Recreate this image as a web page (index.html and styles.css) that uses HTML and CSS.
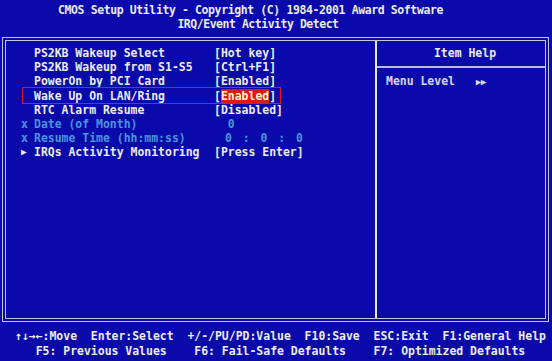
FILE: index.html
```html
<!DOCTYPE html>
<html lang="en">
  <head>
    <meta charset="UTF-8" />
    <title>CMOS Setup Utility</title>
    <link rel="stylesheet" href="styles.css">
  </head>
  <body>
    <div class="screen">
      <header class="title">
        <div class="title-main">CMOS Setup Utility - Copyright (C) 1984-2001 Award Software</div>
        <div class="title-sub">IRQ/Event Activity Detect</div>
      </header>

      <div class="frame">
        <div class="menu">
          <div class="row"><span class="mark"></span><span class="label">PS2KB Wakeup Select</span><span class="value">[Hot key]</span></div>
          <div class="row"><span class="mark"></span><span class="label">PS2KB Wakeup from S1-S5</span><span class="value">[Ctrl+F1]</span></div>
          <div class="row"><span class="mark"></span><span class="label">PowerOn by PCI Card</span><span class="value">[Enabled]</span></div>
          <div class="row marked"><span class="mark"></span><span class="label">Wake Up On LAN/Ring</span><span class="value">[<span class="sel">Enabled</span>]</span></div>
          <div class="row"><span class="mark"></span><span class="label">RTC Alarm Resume</span><span class="value">[Disabled]</span></div>
          <div class="row dim"><span class="mark">x</span><span class="label">Date (of Month)</span><span class="value">  0</span></div>
          <div class="row dim"><span class="mark">x</span><span class="label">Resume Time (hh:mm:ss)</span><span class="value time"> 0 : 0 : 0</span></div>
          <div class="row"><span class="mark mark-arrow">&#9654;</span><span class="label">IRQs Activity Monitoring</span><span class="value">[Press Enter]</span></div>
        </div>

        <div class="help">
          <div class="help-head">Item Help</div>
          <div class="help-body">Menu Level   <span class="arrows">&#9654;&#9654;</span></div>
        </div>
      </div>

      <footer class="keys">
        <div class="key-line">&#8593;&#8595;&#8594;&#8592;:Move  Enter:Select  +/-/PU/PD:Value  F10:Save  ESC:Exit  F1:General Help</div>
        <div class="key-line">   F5: Previous Values    F6: Fail-Safe Defaults    F7: Optimized Defaults</div>
      </footer>
    </div>
  </body>
</html>
```

FILE: styles.css
```css
body {
  margin: 0;
  padding: 0;
  background: #0a0aaa;
  color: #ececf0;
  font-family: "DejaVu Sans Mono", "Liberation Mono", monospace;
  font-weight: bold;
  font-size: 11.46px;
}

.screen {
  width: 552px;
  height: 361px;
  display: flex;
  flex-direction: column;
  overflow: hidden;
}

/* top title bar */
.title {
  height: 37px;
  flex-shrink: 0;
  box-sizing: border-box;
  padding-top: 4px;
  line-height: 13.5px;
  text-align: center;
}

.title-main {
  letter-spacing: -0.37px;
  margin-right: 51px;
  white-space: pre;
}

.title-sub {
  letter-spacing: -0.45px;
  margin-right: 36px;
  white-space: pre;
}

/* main box */
.frame {
  height: 285px;
  flex-shrink: 0;
  margin: 0 3px 0 2px;
  border: 4px double #c4c4dc;
  box-sizing: border-box;
  display: flex;
}

.menu {
  width: 371px;
  box-sizing: border-box;
  border-right: 2px solid #e6e6f0;
  padding: 5px 0 0 15px;
}

.row {
  display: grid;
  grid-template-columns: 13px 180px auto;
  height: 14.2px;
  line-height: 14.2px;
  white-space: pre;
}

.mark-arrow {
  font-size: 9.5px;
}

.dim {
  color: #4a94dc;
}

.time {
  word-spacing: 4px;
}

.marked {
  position: relative;
}

.marked::after {
  content: "";
  position: absolute;
  left: 1px;
  top: -1.6px;
  width: 259px;
  height: 17px;
  box-sizing: border-box;
  border: 1px solid #e41414;
}

.sel {
  background: #d81c14;
  color: #fff6c8;
}

/* item help pane */
.help {
  flex: 1;
}

.help-head {
  padding: 5px 0 6px 8px;
  line-height: 14.2px;
  text-align: center;
  border-bottom: 2px solid #b8b8dc;
}

.help-body {
  padding: 6px 0 0 9px;
  line-height: 14.2px;
  color: #d8d8e4;
  white-space: pre;
}

.arrows {
  font-size: 9.5px;
  letter-spacing: -0.5px;
}

/* key legend */
.keys {
  flex: 1;
  padding: 6.5px 0 0 15px;
  line-height: 15px;
}

.key-line {
  white-space: pre;
}
```
